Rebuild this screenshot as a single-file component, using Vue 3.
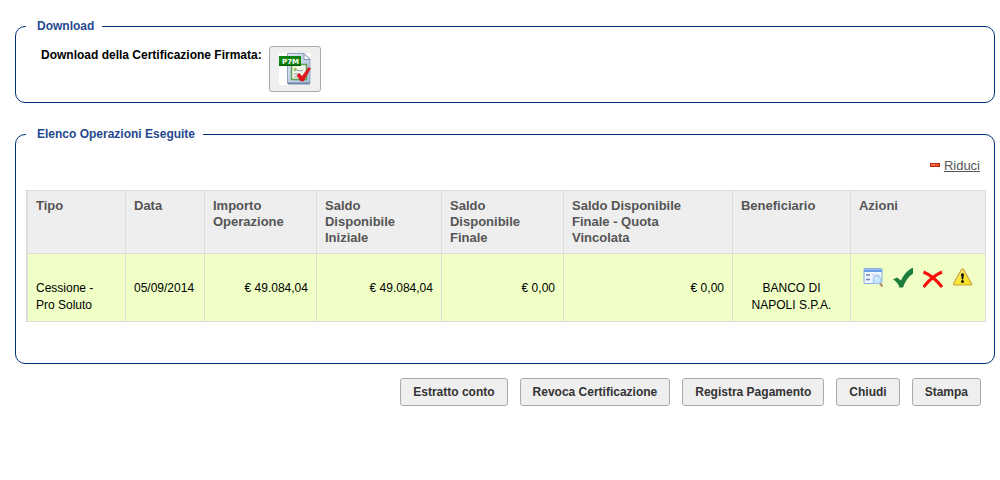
<script setup>
const columns = [
  { label: 'Tipo', width: 99 },
  { label: 'Data', width: 79 },
  { label: 'Importo Operazione', width: 112 },
  { label: 'Saldo Disponibile Iniziale', width: 125 },
  { label: 'Saldo Disponibile Finale', width: 122 },
  { label: 'Saldo Disponibile\nFinale - Quota\nVincolata', width: 169 },
  { label: 'Beneficiario', width: 118 },
  { label: 'Azioni', width: 135 },
]
const total = columns.reduce((sum, c) => sum + c.width, 0)

const rows = [
  {
    tipo: 'Cessione -\nPro Soluto',
    data: '05/09/2014',
    importi: ['€ 49.084,04', '€ 49.084,04', '€ 0,00', '€ 0,00'],
    beneficiario: 'BANCO DI NAPOLI S.P.A.',
  },
]

const commands = ['Estratto conto', 'Revoca Certificazione', 'Registra Pagamento', 'Chiudi', 'Stampa']
</script>

<template>
  <main class="page">
    <fieldset class="panel download">
      <legend>Download</legend>
      <div class="download-row">
        <label for="p7m">Download della Certificazione Firmata:</label>
        <button id="p7m" type="button" class="file-button">
          <svg width="32" height="32" viewBox="0 0 32 32" aria-hidden="true">
            <defs>
              <linearGradient id="sheet" x1="0" y1="0" x2="1" y2="1">
                <stop offset="0" stop-color="#dfe7f1" />
                <stop offset="1" stop-color="#a9bdd8" />
              </linearGradient>
              <linearGradient id="tag" x1="0" y1="0" x2="0" y2="1">
                <stop offset="0" stop-color="#0a7a0e" />
                <stop offset=".5" stop-color="#16930f" />
                <stop offset="1" stop-color="#08690b" />
              </linearGradient>
            </defs>
            <rect width="32" height="32" fill="#fff" />
            <path d="M8.500 .5h16.500l6 6v24h-22.500z" fill="url(#sheet)" stroke="#8fa2bd" />
            <path d="M25 .5v6h6z" fill="#f5f8fb" stroke="#8295af" />
            <path d="M9 30.500h22" stroke="#6c83a3" stroke-width="2" />
            <rect x="12.500" y="11.500" width="15" height="15" fill="#f1f6e6" stroke="#5c9f55" stroke-width="1.500" />
            <path d="M15 18l3-1 3 1 3-1M15 21h5M15 24h4" fill="none" stroke="#8a9fb0" />
            <circle cx="16" cy="16" r="1.500" fill="#a9c94b" />
            <path d="M18 22l2.500-1.500 2.500 3 6.500-9 2 1-7 12.500h-3z" fill="#e31519" stroke="#b80d12" stroke-width=".5" />
            <rect y="3" width="22" height="10" fill="url(#tag)" />
            <path d="M0 12.500h22" stroke="#055c08" />
            <text x="3" y="11" class="tag-text">P7M</text>
          </svg>
        </button>
      </div>
    </fieldset>

    <fieldset class="panel operations">
      <legend>Elenco Operazioni Eseguite</legend>
      <div class="toolbar">
        <svg class="minus" width="10" height="4" viewBox="0 0 10 4" aria-hidden="true">
          <rect width="10" height="4" fill="#b62a0c" />
          <rect x="1" y="1" width="8" height="2" fill="#ee552b" />
          <rect x="1" y="1" width="4" height="1" fill="#ff8a5c" />
        </svg>
        <a href="#">Riduci</a>
      </div>
      <table>
        <colgroup>
          <col v-for="c in columns" :key="c.label" :style="{ width: (c.width / total) * 100 + '%' }" />
        </colgroup>
        <thead>
          <tr>
            <th v-for="c in columns" :key="c.label" scope="col">{{ c.label }}</th>
          </tr>
        </thead>
        <tbody>
          <tr v-for="row in rows" :key="row.data">
            <td>{{ row.tipo }}</td>
            <td class="date">{{ row.data }}</td>
            <td v-for="(v, i) in row.importi" :key="i" class="amount">{{ v }}</td>
            <td class="center">{{ row.beneficiario }}</td>
            <td class="actions">
              <div class="icons">
                <button type="button" aria-label="Dettaglio">
                  <svg width="20" height="20" viewBox="0 0 20 20" aria-hidden="true">
                    <rect x="1" y=".5" width="18" height="15" rx="1" fill="#eef5fe" stroke="#86ace0" />
                    <path d="M1 1h18v3h-18z" fill="#6c9fe6" />
                    <path d="M1 1.500h18" stroke="#9fc3f5" />
                    <path d="M3 7h4M3 11.500h4" stroke="#7389b8" stroke-width="1.500" />
                    <path d="M9 7h8" stroke="#b2c8e5" />
                    <circle cx="14" cy="12" r="4" fill="#c2e5fb" stroke="#9cc4ea" />
                    <path d="M12 11a2.500 2.500 0 0 1 3-1" fill="none" stroke="#f4fcff" />
                    <path d="M17 15.500l2.500 3" stroke="#b78863" stroke-width="2" />
                  </svg>
                </button>
                <button type="button" aria-label="Conferma">
                  <svg width="20" height="20" viewBox="0 0 20 20" aria-hidden="true">
                    <path d="M0 11.500l4-2 4 3c3-6 6-10 12-13v6c-5 3.500-8 8-10 14h-3.500c-1-3.500-3-6-6.500-8z" fill="#1b7d3b" />
                  </svg>
                </button>
                <button type="button" aria-label="Annulla">
                  <svg width="20" height="20" viewBox="0 0 20 20" aria-hidden="true">
                    <path d="M.5 4c7 3 13 8 18.500 15M19 4c-7 3-13 8-18.500 15" fill="none" stroke="#f80c0c" stroke-width="3" />
                  </svg>
                </button>
                <button type="button" aria-label="Avviso">
                  <svg width="20" height="20" viewBox="0 0 20 20" aria-hidden="true">
                    <defs>
                      <linearGradient id="warn" x1="0" y1="0" x2="1" y2="1">
                        <stop offset="0" stop-color="#fff5a8" />
                        <stop offset=".5" stop-color="#f8e63a" />
                        <stop offset="1" stop-color="#f5df10" />
                      </linearGradient>
                    </defs>
                    <path d="M8.500 1.500q1-1.500 2 0l8 14q.5 1.500-1 1.500h-16q-1.500 0-1-1.500z" fill="url(#warn)" stroke="#d2a447" stroke-width="1.200" stroke-linejoin="round" />
                    <path d="M8 6q1.500-1.500 3 0l-.8 5.500h-1.400z" fill="#111" />
                    <circle cx="9.500" cy="13.500" r="1.500" fill="#111" />
                  </svg>
                </button>
              </div>
            </td>
          </tr>
        </tbody>
      </table>
    </fieldset>

    <div class="commands">
      <button v-for="c in commands" :key="c" type="button">{{ c }}</button>
    </div>
  </main>
</template>

<style>
body {
  background: #fff;
}
</style>

<style scoped>
.page {
  padding: 18px 5px 0 15px;
  font: 12px/17px "Liberation Sans", Arial, sans-serif;
  color: #000;
}
.panel {
  margin: 0;
  min-width: 0;
  border: 1px solid #003278;
  border-radius: 10px;
}
legend {
  padding: 0 8px 0 11px;
  font-weight: bold;
  color: #26498f;
}
.download {
  padding: 11px 10px 10px;
}
.download-row {
  display: flex;
  gap: 7px;
  padding-left: 15px;
}
.download-row label {
  font-weight: bold;
  line-height: 18px;
}
button {
  font-family: inherit;
  cursor: pointer;
}
.file-button {
  display: flex;
  padding: 6px 9px;
  border: 1px solid #aaa;
  border-radius: 3px;
  background: #efefef;
}
.tag-text {
  font: bold 7px "DejaVu Sans", sans-serif;
  fill: #fff;
}
.operations {
  margin-top: 23px;
  padding: 14px 8px 41px 10px;
}
.toolbar {
  display: flex;
  justify-content: flex-end;
  align-items: center;
  gap: 4px;
  padding: 0 6px 16px 0;
  font-size: 13px;
}
.minus {
  margin-bottom: 2px;
}
.toolbar a {
  color: #555;
}
table {
  width: 100%;
  table-layout: fixed;
  border-collapse: separate;
  border-spacing: 0;
  border: solid #dcdcdc;
  border-width: 1px 0 0 1px;
}
th,
td {
  border: solid #dcdcdc;
  border-width: 0 1px 1px 0;
  text-align: left;
  vertical-align: top;
  white-space: pre-line;
}
th:first-child,
td:first-child {
  border-left-width: 1px;
}
th {
  padding: 7px 8px;
  background: #eee;
  color: #555;
  font-size: 13px;
  line-height: 16px;
}
td {
  background: #efffc6;
  padding: 26px 8px 7px;
}
.date {
  white-space: nowrap;
}
.amount {
  text-align: right;
}
.center {
  text-align: center;
}
.actions {
  padding: 14px 12px 0;
}
.icons {
  display: flex;
  gap: 10px;
}
.icons button {
  display: flex;
  padding: 0;
  border: 0;
  background: none;
}
.commands {
  display: flex;
  justify-content: flex-end;
  gap: 12px;
  padding: 14px 14px 0 0;
}
.commands button {
  padding: 5px 12px;
  border: 1px solid #aaa;
  border-radius: 3px;
  background: #efefef;
  color: #333;
  font-size: 12px;
  font-weight: bold;
  line-height: 16px;
}
</style>
